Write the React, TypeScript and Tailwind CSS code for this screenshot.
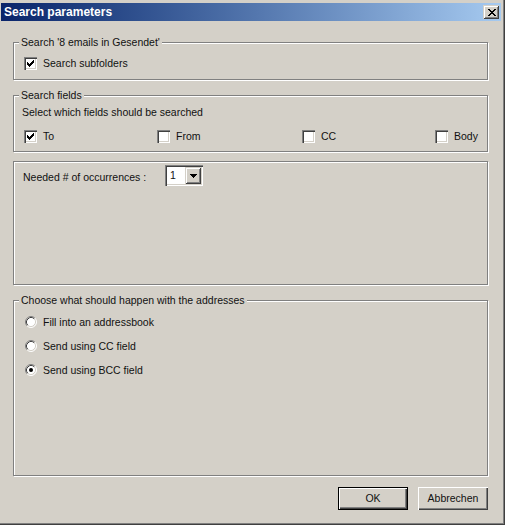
import type { ReactNode } from 'react';

// classic 3D edges
const raised =
  'bg-[#d4d0c8] shadow-[inset_1px_1px_0_#d4d0c8,inset_-1px_-1px_0_#404040,inset_2px_2px_0_#fff,inset_-2px_-2px_0_#808080]';
const sunken =
  'bg-white shadow-[inset_1px_1px_0_#808080,inset_2px_2px_0_#404040,inset_-1px_-1px_0_#fff,inset_-2px_-2px_0_#d4d0c8]';

function Group({ label, className, children }: { label?: string; className?: string; children?: ReactNode }) {
  return (
    <div className={`relative w-[475px] border border-[#808080] shadow-[inset_1px_1px_0_#fff,1px_1px_0_#fff] ${className ?? ''}`}>
      {label && (
        <span className="absolute left-[5px] -top-[7px] px-[2px] bg-[#d4d0c8] leading-[13px] whitespace-nowrap">
          {label}
        </span>
      )}
      {children}
    </div>
  );
}

function Checkbox({ checked, label }: { checked?: boolean; label: string }) {
  // check mark: seven columns, three pixels tall each
  const cols = [2, 3, 4, 3, 2, 1, 0];
  return (
    <div className="flex items-center gap-[6px] h-[13px] leading-[13px]">
      <span className={`w-[13px] h-[13px] shrink-0 flex ${sunken}`}>
        {checked && (
          <svg width="13" height="13" viewBox="0 0 13 13" shapeRendering="crispEdges">
            {cols.map((y, x) => (
              <rect key={x} x={3 + x} y={3 + y} width="1" height="3" fill="#000" />
            ))}
          </svg>
        )}
      </span>
      <span className="whitespace-nowrap">{label}</span>
    </div>
  );
}

function Radio({ checked, label }: { checked?: boolean; label: string }) {
  return (
    <div className="flex items-center gap-[6px] h-[24px]">
      <svg width="12" height="12" viewBox="0 0 12 12" className="shrink-0">
        <circle cx="6" cy="6" r="5" fill="#fff" />
        <path d="M2.11 9.89 A5.5 5.5 0 0 1 9.89 2.11" fill="none" stroke="#808080" />
        <path d="M9.89 2.11 A5.5 5.5 0 0 1 2.11 9.89" fill="none" stroke="#fff" />
        <path d="M2.82 9.18 A4.5 4.5 0 0 1 9.18 2.82" fill="none" stroke="#404040" />
        <path d="M9.18 2.82 A4.5 4.5 0 0 1 2.82 9.18" fill="none" stroke="#d4d0c8" />
        {checked && <circle cx="6" cy="6" r="2" fill="#000" />}
      </svg>
      <span className="whitespace-nowrap leading-[13px]">{label}</span>
    </div>
  );
}

function CloseGlyph() {
  const rows = ['XX....XX', '.XX..XX.', '..XXXX..', '...XX...', '..XXXX..', '.XX..XX.', 'XX....XX'];
  return (
    <svg width="8" height="7" viewBox="0 0 8 7" shapeRendering="crispEdges">
      {rows.flatMap((r, y) =>
        r.split('').map((c, x) => (c === 'X' ? <rect key={`${x}-${y}`} x={x} y={y} width="1" height="1" fill="#000" /> : null))
      )}
    </svg>
  );
}

export default function App() {
  return (
    <div className="w-[505px] h-[525px] flex flex-col pt-[3px] pl-[1px] pr-[4px] bg-[#d4d0c8] text-[#111] text-[10.5px] font-['Liberation_Sans',Arial,sans-serif] shadow-[inset_-1px_-1px_0_#404040,inset_-2px_-2px_0_#808080] overflow-hidden">
      {/* title bar */}
      <div className="h-[18px] flex items-center justify-between pl-[3px] pr-[2px] bg-gradient-to-r from-[#0a246a] to-[#a6caf0]">
        <span className="text-white font-bold text-[12px] leading-[14px]">Search parameters</span>
        <button className={`w-[16px] h-[14px] flex items-center justify-center pl-[1px] ${raised}`}>
          <CloseGlyph />
        </button>
      </div>

      <div className="flex-1 flex flex-col pl-[12px]">
        <Group label="Search '8 emails in Gesendet'" className="mt-[21px] h-[38px]">
          <div className="pl-[10px] pt-[14px]">
            <Checkbox checked label="Search subfolders" />
          </div>
        </Group>

        <Group label="Search fields" className="mt-[15px] h-[57px]">
          <div className="pl-[8px] pt-[10px]">
            <div className="leading-[13px]">Select which fields should be searched</div>
            <div className="flex ml-[2px] mt-[11px]">
              <div className="w-[133px]">
                <Checkbox checked label="To" />
              </div>
              <div className="w-[145px]">
                <Checkbox label="From" />
              </div>
              <div className="w-[133px]">
                <Checkbox label="CC" />
              </div>
              <Checkbox label="Body" />
            </div>
          </div>
        </Group>

        <Group className="mt-[9px] h-[124px]">
          <div className="flex pl-[9px] pt-[3px]">
            <span className="w-[142px] mt-[6px] leading-[13px]">Needed # of occurrences :</span>
            <div className={`w-[38px] h-[21px] p-[2px] flex ${sunken}`}>
              <span className="flex-1 pl-[3px] leading-[17px]">1</span>
              <span className={`w-[16px] h-[17px] flex items-center justify-center ${raised}`}>
                <svg width="7" height="4" viewBox="0 0 7 4" shapeRendering="crispEdges">
                  <path d="M0 0h7v1h-1v1h-1v1h-1v1h-1v-1h-1v-1h-1v-1h-1z" fill="#000" />
                </svg>
              </span>
            </div>
          </div>
        </Group>

        <Group label="Choose what should happen with the addresses" className="mt-[15px] h-[176px]">
          <div className="pl-[11px] pt-[9px]">
            <Radio label="Fill into an addressbook" />
            <Radio label="Send using CC field" />
            <Radio checked label="Send using BCC field" />
          </div>
        </Group>

        <div className="w-[475px] flex justify-end gap-[10px] mt-[11px]">
          <button className="w-[70px] h-[23px] border border-black bg-[#d4d0c8] shadow-[inset_1px_1px_0_#fff,inset_-1px_-1px_0_#404040,inset_-2px_-2px_0_#808080] leading-[13px]">
            OK
          </button>
          <button className="w-[70px] h-[23px] bg-[#d4d0c8] shadow-[inset_1px_1px_0_#fff,inset_-1px_-1px_0_#404040,inset_-2px_-2px_0_#808080] leading-[13px]">
            Abbrechen
          </button>
        </div>
      </div>
    </div>
  );
}
